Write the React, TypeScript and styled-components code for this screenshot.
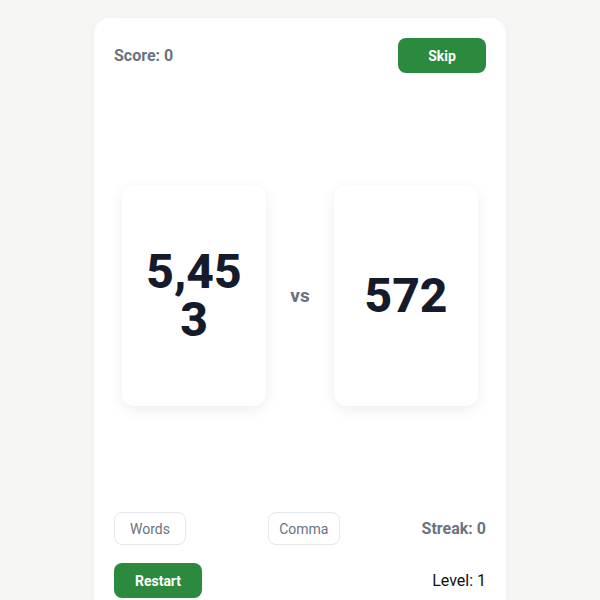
import { useState } from "react"
import styled, { createGlobalStyle } from "styled-components"

const GlobalStyle = createGlobalStyle`
  html, body {
    margin: 0;
    padding: 0;
    background: #f6f6f4;
    font-family: Roboto, "Noto Sans", sans-serif;
  }
  * {
    box-sizing: border-box;
  }
`

const Page = styled.div`
  display: flex;
  justify-content: center;
  padding-top: 18px;
`

const GameCard = styled.div`
  width: 412px;
  height: 600px;
  background: #ffffff;
  border-radius: 16px;
  box-shadow: 0 2px 10px rgba(0, 0, 0, 0.04);
  padding: 20px;
  display: flex;
  flex-direction: column;
`

const Row = styled.div`
  display: flex;
  justify-content: space-between;
  align-items: center;
`

const Stat = styled.span<{ $plain?: boolean }>`
  font-size: 16px;
  font-weight: ${props => (props.$plain ? 400 : 700)};
  color: ${props => (props.$plain ? "#111111" : "#6b7280")};
`

const GreenButton = styled.button`
  width: 88px;
  height: 35px;
  border: none;
  border-radius: 8px;
  background-color: #2b8a3e;
  color: #ffffff;
  font-family: inherit;
  font-size: 14px;
  font-weight: 700;
  cursor: pointer;
`

const Arena = styled.div`
  flex: 1;
  display: flex;
  justify-content: center;
  align-items: center;
  gap: 24px;
  padding-top: 6px;
`

const NumberCard = styled.div`
  width: 144px;
  height: 221px;
  background: #ffffff;
  border-radius: 12px;
  box-shadow: 0 4px 14px rgba(0, 0, 0, 0.07);
  padding: 16px;
  display: flex;
  align-items: center;
  justify-content: center;
  text-align: center;
  font-size: 48px;
  font-weight: 800;
  line-height: 1;
  color: #161b2c;
  word-break: break-all;
`

const Versus = styled.span`
  width: 20px;
  text-align: center;
  font-size: 19px;
  font-weight: 700;
  color: #6b7280;
`

const Footer = styled.div`
  display: flex;
  flex-direction: column;
  gap: 18px;
`

const OptionButton = styled.button`
  width: 72px;
  height: 33px;
  padding: 0;
  background: #ffffff;
  border: 1px solid #e5e7eb;
  border-radius: 8px;
  font-family: inherit;
  font-size: 14px;
  color: #6b7280;
  cursor: pointer;
`

export default function App() {
  const [score] = useState(0)
  const [streak] = useState(0)
  const [level] = useState(1)

  return (
    <>
      <GlobalStyle />
      <Page>
        <GameCard>
          <Row>
            <Stat>Score: {score}</Stat>
            <GreenButton>Skip</GreenButton>
          </Row>

          <Arena>
            <NumberCard>5,453</NumberCard>
            <Versus>vs</Versus>
            <NumberCard>572</NumberCard>
          </Arena>

          <Footer>
            <Row>
              <OptionButton>Words</OptionButton>
              <OptionButton>Comma</OptionButton>
              <Stat>Streak: {streak}</Stat>
            </Row>
            <Row>
              <GreenButton>Restart</GreenButton>
              <Stat $plain>Level: {level}</Stat>
            </Row>
          </Footer>
        </GameCard>
      </Page>
    </>
  )
}
